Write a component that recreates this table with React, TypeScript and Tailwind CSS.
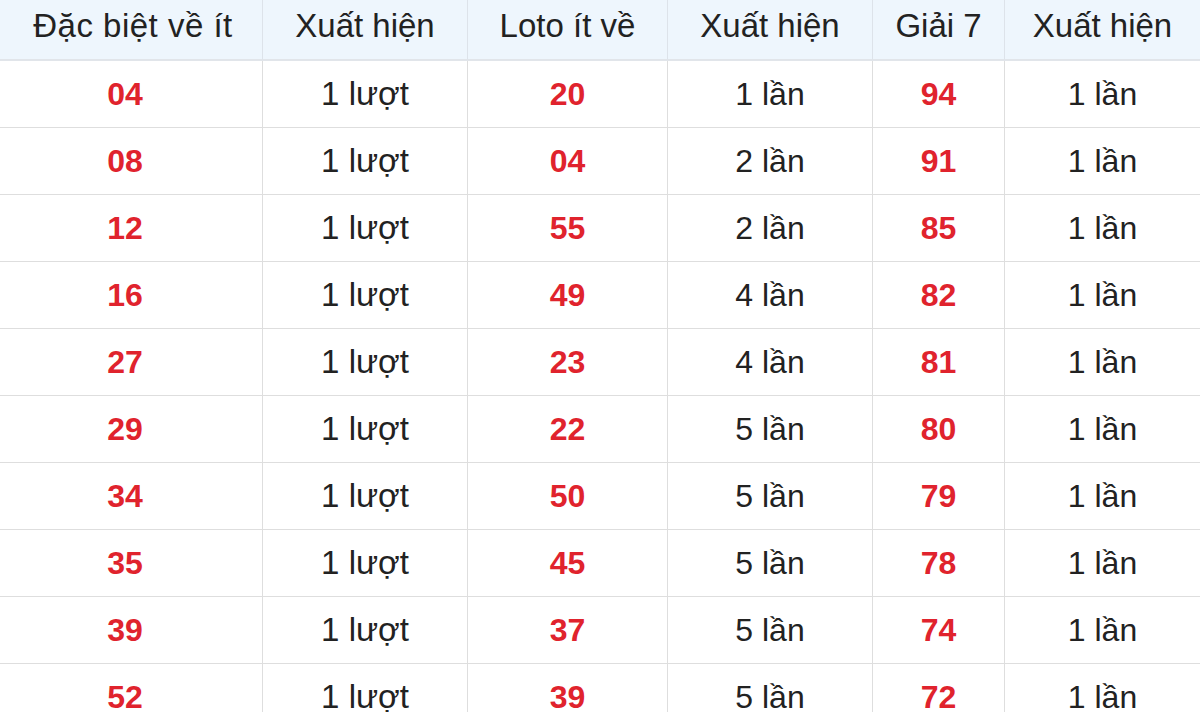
import React from "react";

const col1 = ["04", "08", "12", "16", "27", "29", "34", "35", "39", "52"];
const col3 = ["20", "04", "55", "49", "23", "22", "50", "45", "37", "39"];
const col4 = ["1 lần", "2 lần", "2 lần", "4 lần", "4 lần", "5 lần", "5 lần", "5 lần", "5 lần", "5 lần"];
const col5 = ["94", "91", "85", "82", "81", "80", "79", "78", "74", "72"];

const headers = ["Đặc biệt về ít", "Xuất hiện", "Loto ít về", "Xuất hiện", "Giải 7", "Xuất hiện"];

export default function App() {
  return (
    <div
      className="w-[1200px] h-[712px] overflow-hidden bg-white text-[#222222]"
      style={{ fontFamily: '"Liberation Sans", Arial, sans-serif' }}
    >
      <div className="grid grid-cols-[263px_205px_200px_205px_132px_195px] text-[32px]">
        {headers.map((h, i) => (
          <div
            key={"h" + i}
            className={`h-[61px] flex items-center justify-center bg-[#eef6fd] border-b-2 border-[#e1e5ea] text-[33px] ${i < 5 ? "border-r border-r-[#dde3ea]" : ""} pb-[8px] ${i === 0 ? "tracking-[0.5px] pl-[4px]" : ""}`}
          >
            {h}
          </div>
        ))}
        {col1.map((_, r) => (
          <React.Fragment key={r}>
            <div className="h-[67px] flex items-center justify-center border-b border-r border-[#dedede] font-bold text-[#e0232d] pr-[12px]">
              {col1[r]}
            </div>
            <div className="h-[67px] flex items-center justify-center border-b border-r border-[#dedede] text-[33px]">
              1 lượt
            </div>
            <div className="h-[67px] flex items-center justify-center border-b border-r border-[#dedede] font-bold text-[#e0232d]">
              {col3[r]}
            </div>
            <div className="h-[67px] flex items-center justify-center border-b border-r border-[#dedede]">
              {col4[r]}
            </div>
            <div className="h-[67px] flex items-center justify-center border-b border-r border-[#dedede] font-bold text-[#e0232d]">
              {col5[r]}
            </div>
            <div className="h-[67px] flex items-center justify-center border-b border-[#dedede]">
              1 lần
            </div>
          </React.Fragment>
        ))}
      </div>
    </div>
  );
}
